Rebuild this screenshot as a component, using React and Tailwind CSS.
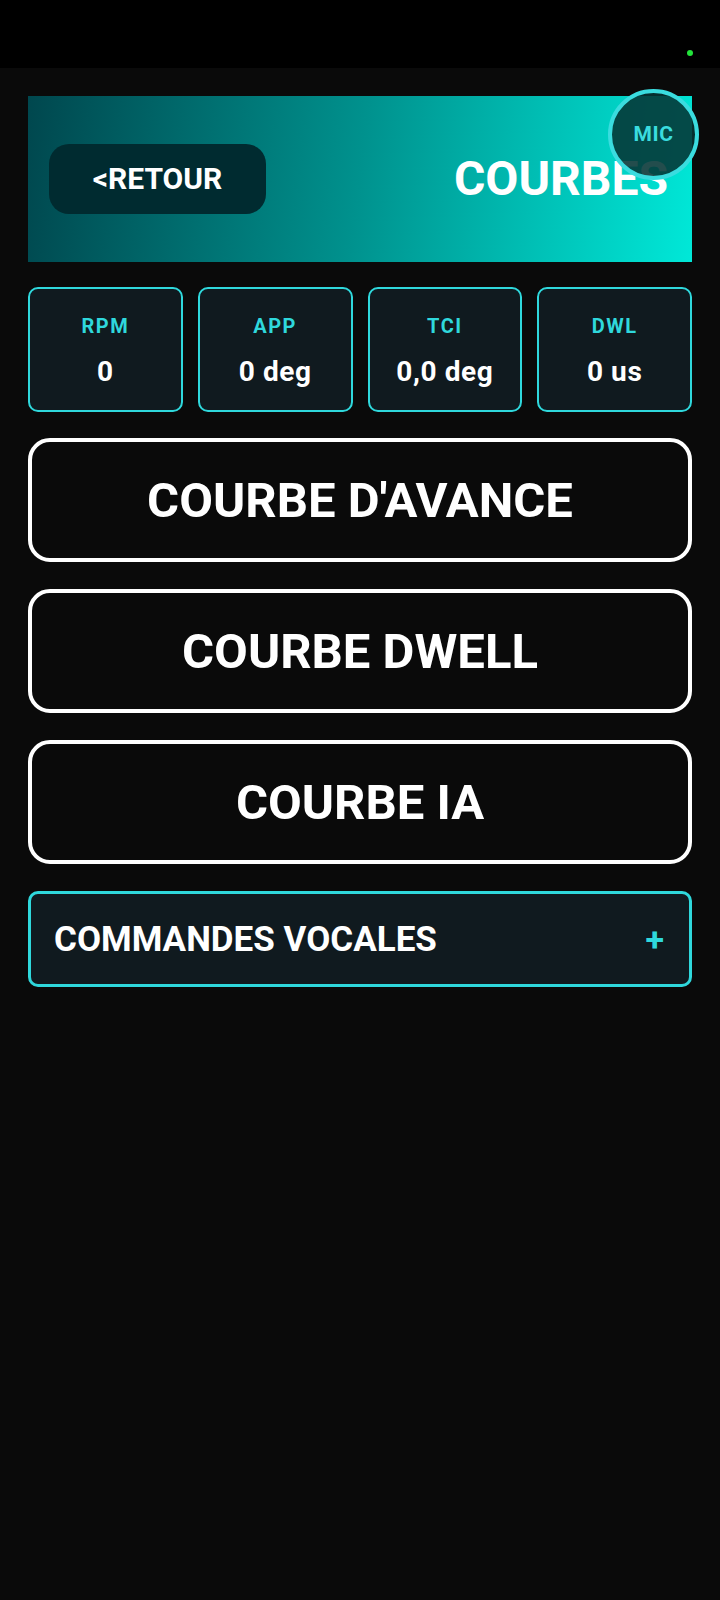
import React from "react";

const F = { fontFamily: "Roboto, 'Liberation Sans', sans-serif" };

function Stat({ label, value }) {
  return (
    <div className="flex h-[125px] flex-col items-center justify-center rounded-[10px] border-2 border-[#2fd8dc] bg-[#101a1f]">
      <div className="mt-[2px] text-[20px] font-bold leading-none tracking-[1.5px] text-[#2fd8dc]">{label}</div>
      <div className="mt-[22px] text-[28px] font-bold leading-none tracking-[0.6px] text-white">{value}</div>
    </div>
  );
}

function Big({ children }) {
  return (
    <div className="flex h-[124px] items-center justify-center rounded-[22px] border-4 border-white bg-[#0a0a0a]">
      <span className="text-[49px] font-bold leading-none text-white">{children}</span>
    </div>
  );
}

export default function App() {
  return (
    <div style={F} className="min-h-[1600px] w-[720px] bg-[#0a0a0a]">
      <div className="relative h-[68px] bg-black">
        <div className="absolute left-[687px] top-[50px] h-[6px] w-[6px] rounded-full bg-[#22e33a]" />
      </div>
      <div className="flex flex-col px-[28px] pt-[28px]">
        <div className="relative flex h-[166px] items-center justify-between bg-[linear-gradient(97deg,#00474e_0%,#00928e_50%,#00e8d8_100%)] pl-[21px] pr-[24px]">
          <div className="flex h-[70px] w-[217px] items-center justify-center rounded-[20px] bg-[#002b30]">
            <span className="text-[30px] font-bold leading-none text-white">&lt;RETOUR</span>
          </div>
          <span className="text-[48px] font-bold leading-none text-white">COURBES</span>
          <div className="absolute right-[-7px] top-[-7px] flex h-[91px] w-[91px] items-center justify-center rounded-full border-4 border-[#3adcdf] bg-[#043434]/[0.88]">
            <span className="text-[21px] font-bold leading-none tracking-[0.5px] text-[#3adcdf]">MIC</span>
          </div>
        </div>

        <div className="mt-[25px] grid grid-cols-4 gap-[15px]">
          <Stat label="RPM" value="0" />
          <Stat label="APP" value="0 deg" />
          <Stat label="TCI" value="0,0 deg" />
          <Stat label="DWL" value="0 us" />
        </div>

        <div className="mt-[26px] flex flex-col gap-[27px]">
          <Big>COURBE D'AVANCE</Big>
          <Big>COURBE DWELL</Big>
          <Big>COURBE IA</Big>
          <div className="flex h-[96px] items-center justify-between rounded-[10px] border-[3px] border-[#2fd8dc] bg-[#101a1f] pl-[23px] pr-[25px]">
            <span className="text-[35px] font-bold leading-none text-white">COMMANDES VOCALES</span>
            <span className="text-[34px] font-bold leading-none text-[#2fd8dc]">+</span>
          </div>
        </div>
      </div>
    </div>
  );
}
